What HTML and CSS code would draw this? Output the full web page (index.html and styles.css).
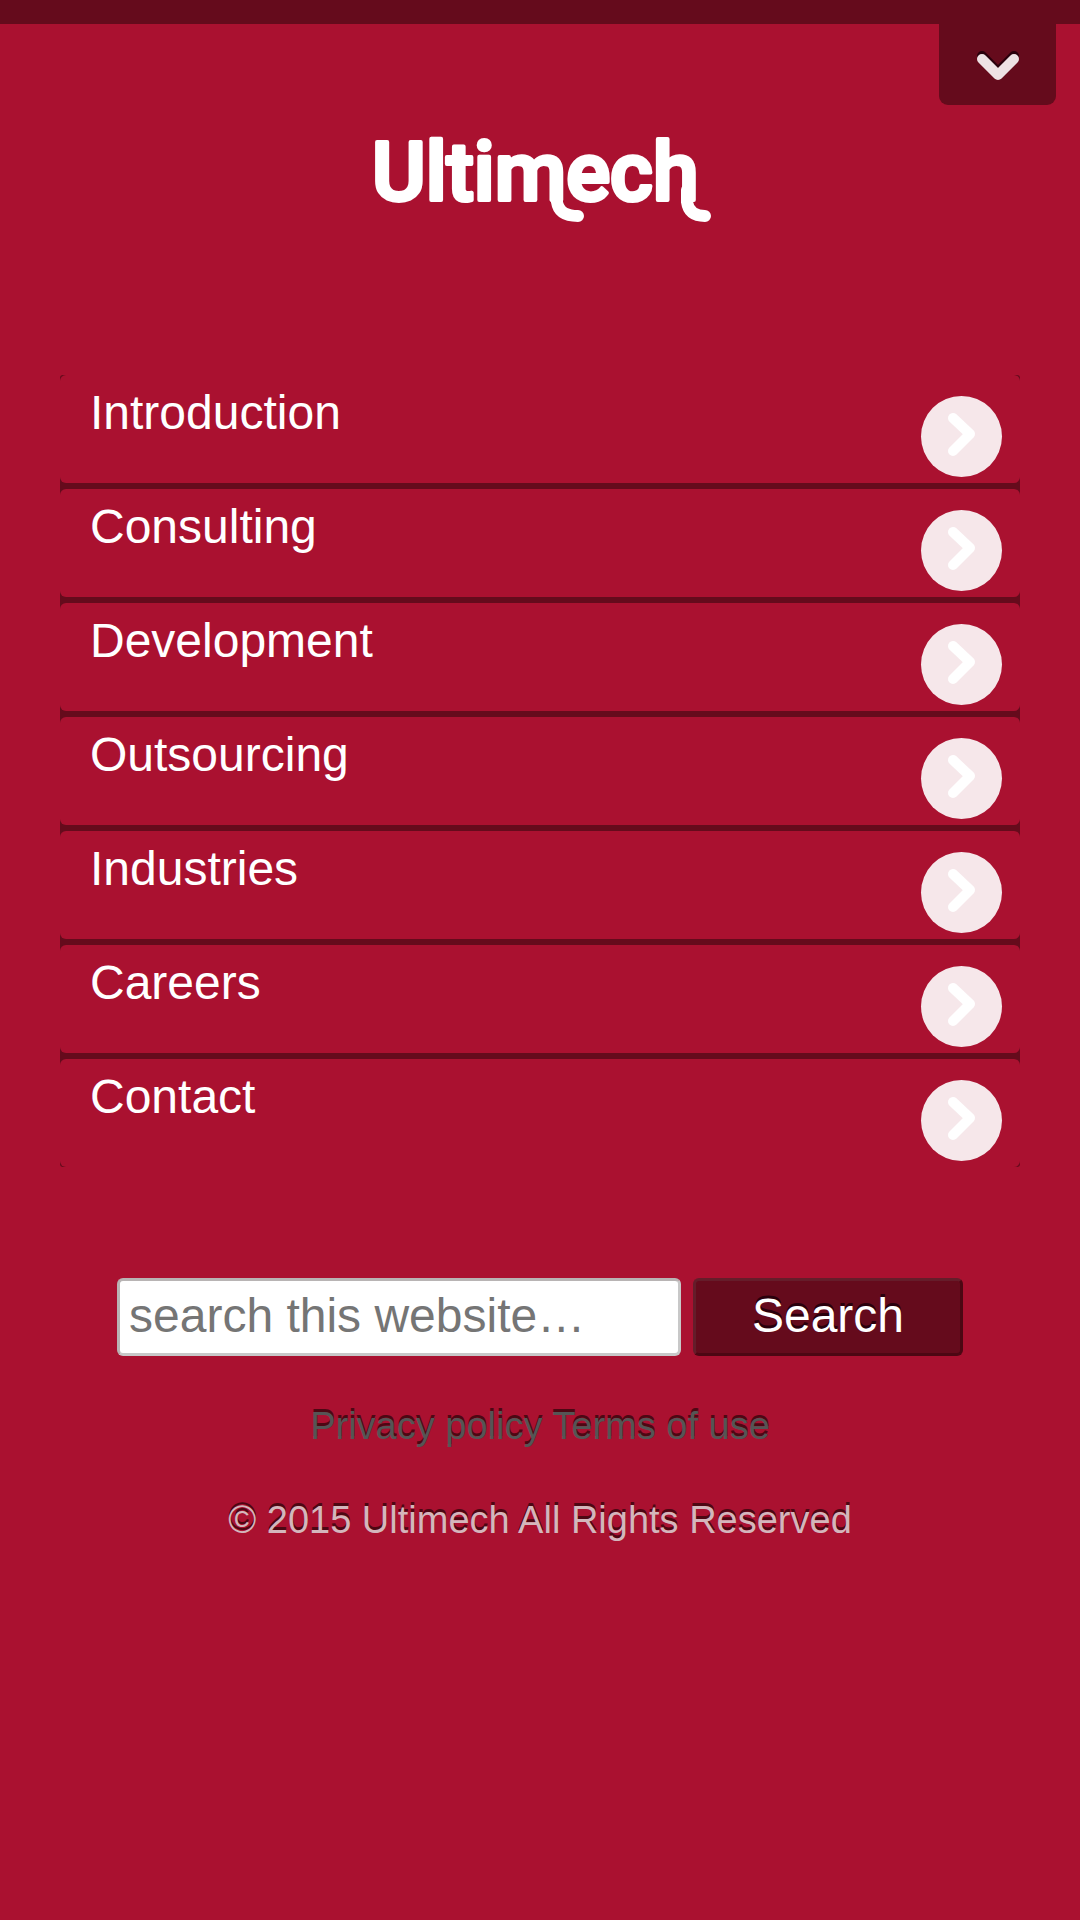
FILE: index.html
```html
<!DOCTYPE html>
<html lang="en">
<head>
    <meta charset="UTF-8">
    <meta name="viewport" content="width=device-width, initial-scale=1.0">
    <title>Ultimech</title>
    <link rel="stylesheet" href="styles.css">
</head>
<body>
    <header class="top-bar">
        <button type="button" class="top-toggle" aria-label="Open panel">
            <svg width="44" height="36" viewBox="0 0 44 36">
                <path class="toggle-shadow" d="M6 9 L22 25 L38 9"/>
                <path class="toggle-arrow" d="M6 12 L22 28 L38 12"/>
            </svg>
        </button>
    </header>

    <a class="logo" href="#" aria-label="Ultimech home">
        <svg width="360" height="100" viewBox="0 0 360 100">
            <text class="logo-text" x="12" y="70">Ultimech</text>
            <!-- tails under the m and the h -->
            <path class="logo-tail" d="M197 60 V72 Q199 86 218 86"/>
            <path class="logo-tail" d="M327 60 V72 Q329 86 345 86"/>
        </svg>
    </a>

    <nav class="menu">
        <ul class="menu-list">
            <li><a class="menu-item" href="#">Introduction <span class="menu-icon"><svg viewBox="0 0 81 81"><path d="M32 22 L49 38 L32 55"/></svg></span></a></li>
            <li><a class="menu-item" href="#">Consulting <span class="menu-icon"><svg viewBox="0 0 81 81"><path d="M32 22 L49 38 L32 55"/></svg></span></a></li>
            <li><a class="menu-item" href="#">Development <span class="menu-icon"><svg viewBox="0 0 81 81"><path d="M32 22 L49 38 L32 55"/></svg></span></a></li>
            <li><a class="menu-item" href="#">Outsourcing <span class="menu-icon"><svg viewBox="0 0 81 81"><path d="M32 22 L49 38 L32 55"/></svg></span></a></li>
            <li><a class="menu-item" href="#">Industries <span class="menu-icon"><svg viewBox="0 0 81 81"><path d="M32 22 L49 38 L32 55"/></svg></span></a></li>
            <li><a class="menu-item" href="#">Careers <span class="menu-icon"><svg viewBox="0 0 81 81"><path d="M32 22 L49 38 L32 55"/></svg></span></a></li>
            <li><a class="menu-item" href="#">Contact <span class="menu-icon"><svg viewBox="0 0 81 81"><path d="M32 22 L49 38 L32 55"/></svg></span></a></li>
        </ul>
    </nav>

    <form class="search-form">
        <input type="text" class="search-input" aria-label="Search this website" placeholder="search this website…">
        <button type="submit" class="search-btn">Search</button>
    </form>

    <footer class="footer">
        <p class="footer-links"><a href="#">Privacy policy</a> <a href="#">Terms of use</a></p>
        <p>© 2015 Ultimech All Rights Reserved</p>
    </footer>
</body>
</html>
```
FILE: styles.css
```css
/* Basic Reset */
* {
    margin: 0;
    padding: 0;
    box-sizing: border-box;
}

body {
    font-family: Arial, "Liberation Sans", sans-serif;
    background: #aa1130;
    color: #ffffff;
    min-height: 100vh;
}

/* Top bar */
.top-bar {
    height: 24px;
    background: #650b1c;
    display: flex;
    justify-content: flex-end;
    align-items: flex-start;
    padding-right: 24px;
}

.top-toggle {
    width: 117px;
    height: 105px;
    padding-top: 24px;
    border: none;
    border-radius: 0 0 9px 9px;
    background: #650b1c;
    cursor: pointer;
}

.top-toggle svg {
    display: block;
    margin: 0 auto;
}

.top-toggle path {
    fill: none;
    stroke-width: 10;
    stroke-linecap: round;
    stroke-linejoin: round;
}

.top-toggle .toggle-shadow {
    stroke: #2a000c;
}

.top-toggle .toggle-arrow {
    stroke: #eee2e4;
}

/* Logo */
.logo {
    display: block;
    margin-top: 106px;
}

.logo svg {
    display: block;
    margin: 0 auto;
    overflow: visible;
}

.logo-text {
    font-family: Roboto, sans-serif;
    font-size: 82px;
    font-weight: 500;
    fill: #ffffff;
    stroke: #ffffff;
    stroke-width: 4;
    stroke-linejoin: round;
}

.logo-tail {
    fill: none;
    stroke: #ffffff;
    stroke-width: 12;
    stroke-linecap: round;
}

/* Menu */
.menu {
    margin: 145px 60px 0;
    background: #650b1c;
    border-radius: 3px;
}

.menu-list {
    list-style: none;
    display: flex;
    flex-direction: column;
    gap: 6px;
}

.menu-item {
    display: flex;
    justify-content: space-between;
    align-items: flex-start;
    height: 108px;
    padding: 10px 18px 0 30px;
    border-radius: 6px;
    background: #aa1130;
    color: #ffffff;
    font-size: 48px;
    line-height: 56px;
    text-decoration: none;
}

.menu-icon {
    width: 81px;
    height: 81px;
    margin-top: 11px;
    border-radius: 50%;
    background: #f6e7ea;
}

.menu-icon svg {
    display: block;
}

.menu-icon path {
    fill: none;
    stroke: #ffffff;
    stroke-width: 10;
    stroke-linecap: round;
    stroke-linejoin: round;
}

/* Search */
.search-form {
    display: flex;
    gap: 12px;
    margin: 111px 117px 0;
}

.search-input,
.search-btn {
    height: 78px;
    border: 3px solid;
    border-radius: 6px;
    font-family: inherit;
    font-size: 48px;
}

.search-input {
    flex: 1;
    min-width: 0;
    padding: 0 9px 4px;
    border-color: #b8b4b4 #c8c8c8 #c8c8c8 #b8b4b4;
    background: #ffffff;
    color: #333333;
}

.search-input::placeholder {
    color: #757575;
}

.search-btn {
    width: 270px;
    padding-bottom: 4px;
    border-color: #651d2a #4d0713 #4d0713 #651d2a;
    background: #650b1c;
    color: #ffffff;
    text-shadow: 0 -3px 0 #2a000c;
    cursor: pointer;
}

/* Footer */
.footer {
    margin-top: 48px;
    padding-bottom: 48px;
    text-align: center;
    font-size: 38px;
    line-height: 44px;
    color: #d4b6bc;
    text-shadow: 0 -3px 0 #4d0713;
}

.footer-links {
    margin-bottom: 50px;
}

.footer-links a {
    color: #555555;
    text-decoration: none;
}
```
